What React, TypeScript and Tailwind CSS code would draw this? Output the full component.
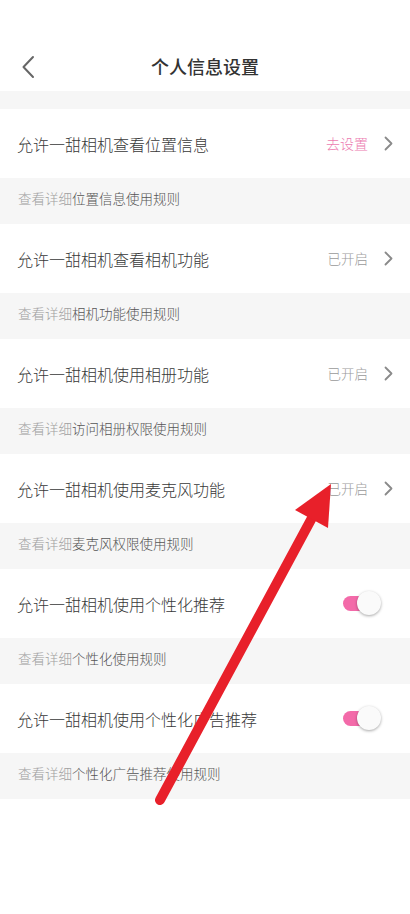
import React from "react";

type Item = {
  title: string;
  rule: string;
  kind: "link" | "on" | "toggle";
};

const ITEMS: Item[] = [
  { title: "允许一甜相机查看位置信息", rule: "位置信息使用规则", kind: "link" },
  { title: "允许一甜相机查看相机功能", rule: "相机功能使用规则", kind: "on" },
  { title: "允许一甜相机使用相册功能", rule: "访问相册权限使用规则", kind: "on" },
  { title: "允许一甜相机使用麦克风功能", rule: "麦克风权限使用规则", kind: "on" },
  { title: "允许一甜相机使用个性化推荐", rule: "个性化使用规则", kind: "toggle" },
  { title: "允许一甜相机使用个性化广告推荐", rule: "个性化广告推荐使用规则", kind: "toggle" },
];

function Chevron() {
  return (
    <svg width="9" height="15" viewBox="0 0 9 15" fill="none" className="ml-[16px]">
      <path d="M1.5 1.5 L7.5 7.5 L1.5 13.5" stroke="#8a8a8a" strokeWidth="1.8" strokeLinecap="round" strokeLinejoin="round" />
    </svg>
  );
}

function Toggle() {
  return (
    <div className="relative w-[38px] h-[26px] mr-[12px] flex items-center">
      <div className="w-[30px] h-[15px] rounded-full bg-[#f36aa9]" />
      <div className="absolute right-0 top-0 w-[24px] h-[24px] rounded-full bg-[#fafafa] shadow-[0_1px_3px_rgba(0,0,0,0.35)]" />
    </div>
  );
}

export default function App() {
  return (
    <div
      className="relative w-[410px] min-h-[914px] bg-white overflow-hidden"
      style={{ fontFamily: '"Noto Sans CJK SC", "Noto Sans", sans-serif' }}
    >
      {/* Header */}
      <div className="pt-[44px]">
        <div className="relative h-[47px] flex items-center justify-center">
          <svg width="14" height="24" viewBox="0 0 14 24" fill="none" className="absolute left-[21px] top-[11px]">
            <path d="M12 2 L2.5 12 L12 22" stroke="#666" strokeWidth="2" strokeLinecap="round" strokeLinejoin="round" />
          </svg>
          <h1 className="text-[18px] text-[#333] font-medium pb-[2px]">个人信息设置</h1>
        </div>
      </div>

      <div className="h-[18px] bg-[#f6f6f6]" />

      {ITEMS.map((item) => (
        <div key={item.title}>
          <div className="h-[69px] px-[17px] flex items-center">
            <span className="flex-1 text-[16px] text-[#383838] font-light">{item.title}</span>
            {item.kind === "link" && (
              <>
                <span className="text-[14px] text-[#ec7bb0] font-light">去设置</span>
                <Chevron />
              </>
            )}
            {item.kind === "on" && (
              <>
                <span className="text-[13.5px] text-[#9a9a9a] font-light">已开启</span>
                <Chevron />
              </>
            )}
            {item.kind === "toggle" && <Toggle />}
          </div>
          <div className="h-[46px] px-[18px] pb-[5px] flex items-center bg-[#f6f6f6] text-[13.5px] font-light">
            <span className="text-[#a0a0a0]">查看详细</span>
            <span className="text-[#555]">{item.rule}</span>
          </div>
        </div>
      ))}

      {/* Annotation arrow */}
      <svg className="absolute left-0 top-0 pointer-events-none" width="410" height="914" viewBox="0 0 410 914">
        <line x1="160" y1="800" x2="313" y2="516" stroke="#e8202a" strokeWidth="10" strokeLinecap="round" />
        <polygon points="331,484 295,510 328,528" fill="#e8202a" />
      </svg>
    </div>
  );
}
